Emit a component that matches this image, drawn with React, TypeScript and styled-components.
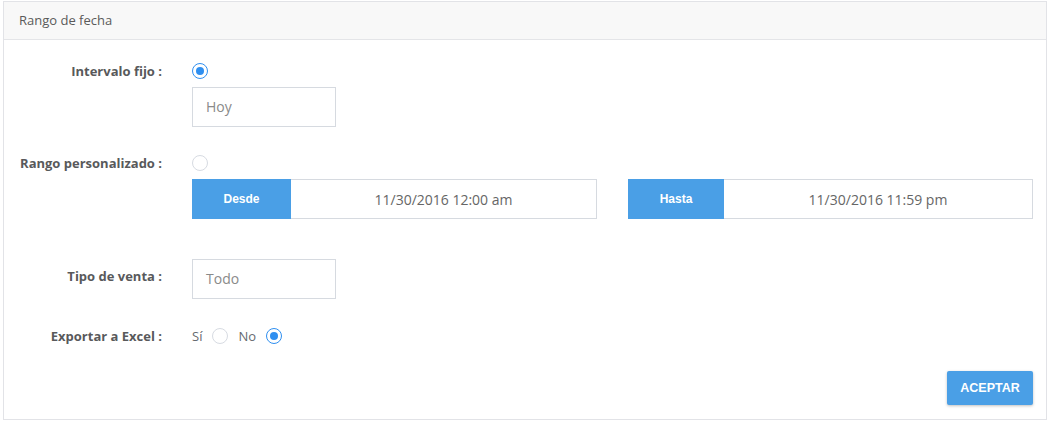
import styled, { createGlobalStyle } from "styled-components";

const GlobalStyle = createGlobalStyle`
  body {
    margin: 0;
    background: #ffffff;
    font-family: "Open Sans", "Liberation Sans", sans-serif;
  }
`;

export default function App() {
  return (
    <>
      <GlobalStyle />
      <Panel>
        <PanelHeader>Rango de fecha</PanelHeader>
        <PanelBody>
          <Row $mt={21}>
            <Label>Intervalo fijo :</Label>
            <Controls>
              <RadioLine>
                <Radio $checked />
              </RadioLine>
              <TextBox>Hoy</TextBox>
            </Controls>
          </Row>

          <Row $mt={26}>
            <Label>Rango personalizado :</Label>
            <Controls>
              <RadioLine>
                <Radio />
              </RadioLine>
              <DateRow>
                <DateGroup>
                  <AddOn $w={99}>Desde</AddOn>
                  <DateValue>11/30/2016 12:00 am</DateValue>
                </DateGroup>
                <DateGroup>
                  <AddOn $w={96}>Hasta</AddOn>
                  <DateValue>11/30/2016 11:59 pm</DateValue>
                </DateGroup>
              </DateRow>
            </Controls>
          </Row>

          <Row $mt={40}>
            <Label $pt={7}>Tipo de venta :</Label>
            <Controls>
              <TextBox $mt={0}>Todo</TextBox>
            </Controls>
          </Row>

          <Row $mt={27}>
            <Label>Exportar a Excel :</Label>
            <Controls>
              <RadioLine>
                <OptionText>Sí</OptionText>
                <Radio $mr={10} />
                <OptionText>No</OptionText>
                <Radio $checked />
              </RadioLine>
            </Controls>
          </Row>

          <Footer>
            <AcceptButton>ACEPTAR</AcceptButton>
          </Footer>
        </PanelBody>
      </Panel>
    </>
  );
}

const Panel = styled.div`
  margin: 1px 3px 0 3px;
  width: 1044px;
  height: 419px;
  box-sizing: border-box;
  border: 1px solid #e2e3e7;
  background: #ffffff;
`;

const PanelHeader = styled.div`
  height: 37px;
  line-height: 37px;
  padding-left: 15px;
  background: #f8f8f8;
  border-bottom: 1px solid #e4e5e8;
  font-size: 13px;
  color: #5a5a5a;
`;

const PanelBody = styled.div`
  padding: 0 13px 0 0;
`;

const Row = styled.div<{ $mt: number }>`
  display: grid;
  grid-template-columns: 158px 1fr;
  column-gap: 30px;
  margin-top: ${({ $mt }) => $mt}px;
`;

const Label = styled.div<{ $pt?: number }>`
  text-align: right;
  font-size: 13px;
  font-weight: 700;
  line-height: 20px;
  color: #58595b;
  padding-top: ${({ $pt }) => $pt ?? 0}px;
`;

const Controls = styled.div`
  display: flex;
  flex-direction: column;
`;

const RadioLine = styled.div`
  display: flex;
  align-items: center;
  height: 20px;
`;

const Radio = styled.span<{ $checked?: boolean; $mr?: number }>`
  width: 16px;
  height: 16px;
  box-sizing: border-box;
  border-radius: 50%;
  border: 1px solid ${({ $checked }) => ($checked ? "#2f8ff0" : "#d7dbe2")};
  background: #ffffff;
  position: relative;
  flex-shrink: 0;
  margin-right: ${({ $mr }) => $mr ?? 0}px;

  &::after {
    content: "";
    display: ${({ $checked }) => ($checked ? "block" : "none")};
    position: absolute;
    left: 3px;
    top: 3px;
    width: 8px;
    height: 8px;
    border-radius: 50%;
    background: #2f8ff0;
  }
`;

const OptionText = styled.span`
  font-size: 13px;
  color: #666a70;
  margin-right: 10px;
`;

const TextBox = styled.div<{ $mt?: number }>`
  margin-top: ${({ $mt }) => $mt ?? 6}px;
  width: 144px;
  height: 40px;
  box-sizing: border-box;
  border: 1px solid #d6dae0;
  padding-left: 13px;
  line-height: 38px;
  font-size: 14px;
  color: #8a8a8a;
`;

const DateRow = styled.div`
  margin-top: 6px;
  display: grid;
  grid-template-columns: 405px 405px;
  column-gap: 31px;
`;

const DateGroup = styled.div`
  display: flex;
  height: 40px;
  box-sizing: border-box;
  border: 1px solid #d6dae0;
  border-left: none;
`;

const AddOn = styled.div<{ $w: number }>`
  width: ${({ $w }) => $w}px;
  margin-top: -1px;
  margin-bottom: -1px;
  background: #4a9fe6;
  color: #ffffff;
  font-family: "Liberation Sans", Arial, sans-serif;
  font-weight: 700;
  font-size: 12px;
  display: flex;
  align-items: center;
  justify-content: center;
  flex-shrink: 0;
`;

const DateValue = styled.div`
  flex: 1;
  display: flex;
  align-items: center;
  justify-content: center;
  font-size: 14px;
  color: #666666;
`;

const Footer = styled.div`
  display: flex;
  justify-content: flex-end;
  margin-top: 25px;
`;

const AcceptButton = styled.button`
  width: 86px;
  height: 34px;
  border: none;
  border-radius: 2px;
  background: #4a9fe6;
  color: #ffffff;
  font-family: "Liberation Sans", Arial, sans-serif;
  font-weight: 700;
  font-size: 12.5px;
  box-shadow: 0 1px 3px rgba(0, 0, 0, 0.25);
  cursor: pointer;
`;
